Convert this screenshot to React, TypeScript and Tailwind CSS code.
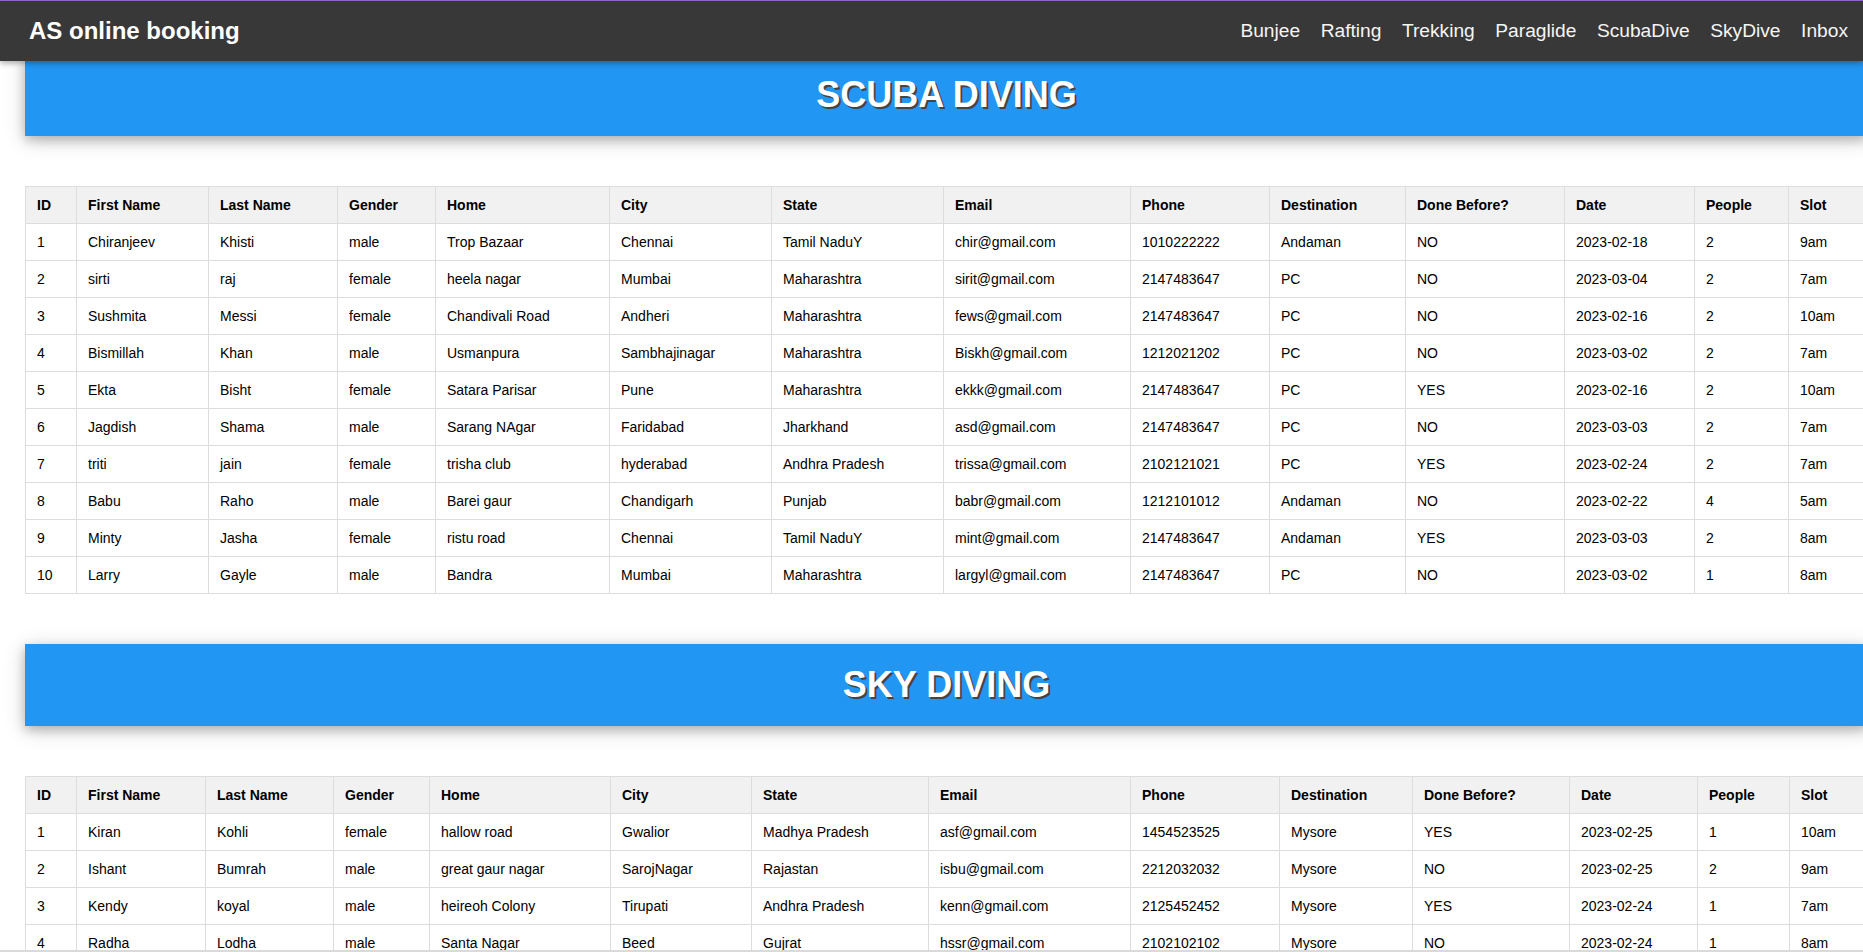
import React from "react";

type Booking = {
	id: number;
	first: string;
	last: string;
	gender: string;
	home: string;
	city: string;
	state: string;
	email: string;
	phone: string;
	destination: string;
	doneBefore: string;
	date: string;
	people: number;
	slot: string;
};

const navLinks = ["Bunjee", "Rafting", "Trekking", "Paraglide", "ScubaDive", "SkyDive", "Inbox"];

const headings = [
	"ID",
	"First Name",
	"Last Name",
	"Gender",
	"Home",
	"City",
	"State",
	"Email",
	"Phone",
	"Destination",
	"Done Before?",
	"Date",
	"People",
	"Slot",
];

const scubaCols = [51, 132, 129, 98, 174, 162, 172, 187, 139, 136, 159, 130, 94, 80];
const skyCols = [51, 129, 128, 96, 181, 141, 177, 202, 149, 133, 157, 128, 92, 79];

const scuba: Booking[] = [
	{ id: 1, first: "Chiranjeev", last: "Khisti", gender: "male", home: "Trop Bazaar", city: "Chennai", state: "Tamil NaduY", email: "chir@gmail.com", phone: "1010222222", destination: "Andaman", doneBefore: "NO", date: "2023-02-18", people: 2, slot: "9am" },
	{ id: 2, first: "sirti", last: "raj", gender: "female", home: "heela nagar", city: "Mumbai", state: "Maharashtra", email: "sirit@gmail.com", phone: "2147483647", destination: "PC", doneBefore: "NO", date: "2023-03-04", people: 2, slot: "7am" },
	{ id: 3, first: "Sushmita", last: "Messi", gender: "female", home: "Chandivali Road", city: "Andheri", state: "Maharashtra", email: "fews@gmail.com", phone: "2147483647", destination: "PC", doneBefore: "NO", date: "2023-02-16", people: 2, slot: "10am" },
	{ id: 4, first: "Bismillah", last: "Khan", gender: "male", home: "Usmanpura", city: "Sambhajinagar", state: "Maharashtra", email: "Biskh@gmail.com", phone: "1212021202", destination: "PC", doneBefore: "NO", date: "2023-03-02", people: 2, slot: "7am" },
	{ id: 5, first: "Ekta", last: "Bisht", gender: "female", home: "Satara Parisar", city: "Pune", state: "Maharashtra", email: "ekkk@gmail.com", phone: "2147483647", destination: "PC", doneBefore: "YES", date: "2023-02-16", people: 2, slot: "10am" },
	{ id: 6, first: "Jagdish", last: "Shama", gender: "male", home: "Sarang NAgar", city: "Faridabad", state: "Jharkhand", email: "asd@gmail.com", phone: "2147483647", destination: "PC", doneBefore: "NO", date: "2023-03-03", people: 2, slot: "7am" },
	{ id: 7, first: "triti", last: "jain", gender: "female", home: "trisha club", city: "hyderabad", state: "Andhra Pradesh", email: "trissa@gmail.com", phone: "2102121021", destination: "PC", doneBefore: "YES", date: "2023-02-24", people: 2, slot: "7am" },
	{ id: 8, first: "Babu", last: "Raho", gender: "male", home: "Barei gaur", city: "Chandigarh", state: "Punjab", email: "babr@gmail.com", phone: "1212101012", destination: "Andaman", doneBefore: "NO", date: "2023-02-22", people: 4, slot: "5am" },
	{ id: 9, first: "Minty", last: "Jasha", gender: "female", home: "ristu road", city: "Chennai", state: "Tamil NaduY", email: "mint@gmail.com", phone: "2147483647", destination: "Andaman", doneBefore: "YES", date: "2023-03-03", people: 2, slot: "8am" },
	{ id: 10, first: "Larry", last: "Gayle", gender: "male", home: "Bandra", city: "Mumbai", state: "Maharashtra", email: "largyl@gmail.com", phone: "2147483647", destination: "PC", doneBefore: "NO", date: "2023-03-02", people: 1, slot: "8am" },
];

const sky: Booking[] = [
	{ id: 1, first: "Kiran", last: "Kohli", gender: "female", home: "hallow road", city: "Gwalior", state: "Madhya Pradesh", email: "asf@gmail.com", phone: "1454523525", destination: "Mysore", doneBefore: "YES", date: "2023-02-25", people: 1, slot: "10am" },
	{ id: 2, first: "Ishant", last: "Bumrah", gender: "male", home: "great gaur nagar", city: "SarojNagar", state: "Rajastan", email: "isbu@gmail.com", phone: "2212032032", destination: "Mysore", doneBefore: "NO", date: "2023-02-25", people: 2, slot: "9am" },
	{ id: 3, first: "Kendy", last: "koyal", gender: "male", home: "heireoh Colony", city: "Tirupati", state: "Andhra Pradesh", email: "kenn@gmail.com", phone: "2125452452", destination: "Mysore", doneBefore: "YES", date: "2023-02-24", people: 1, slot: "7am" },
	{ id: 4, first: "Radha", last: "Lodha", gender: "male", home: "Santa Nagar", city: "Beed", state: "Gujrat", email: "hssr@gmail.com", phone: "2102102102", destination: "Mysore", doneBefore: "NO", date: "2023-02-24", people: 1, slot: "8am" },
];

function Banner({ title }: { title: string }) {
	return (
		<div className="w-[1843px] h-[82px] bg-[#2196F3] flex items-center justify-center shadow-[0_4px_10px_0_rgba(0,0,0,0.2),0_4px_20px_0_rgba(0,0,0,0.19)]">
			<h1 className="text-[36px] font-bold text-white [text-shadow:2px_2px_0_#444]">{title}</h1>
		</div>
	);
}

function BookingTable({ rows, cols }: { rows: Booking[]; cols: number[] }) {
	return (
		<table className="table-fixed border-collapse border border-[#dddddd] w-[1843px] text-[14px] leading-5 text-black">
			<colgroup>
				{cols.map((w, i) => (
					<col key={i} style={{ width: w }} />
				))}
			</colgroup>
			<thead>
				<tr className="bg-[#f1f1f1]">
					{headings.map((h) => (
						<th key={h} className="border border-[#dddddd] text-left font-bold py-2 pl-[11px] pr-2 whitespace-nowrap">
							{h}
						</th>
					))}
				</tr>
			</thead>
			<tbody>
				{rows.map((r) => (
					<tr key={r.id}>
						{[r.id, r.first, r.last, r.gender, r.home, r.city, r.state, r.email, r.phone, r.destination, r.doneBefore, r.date, r.people, r.slot].map((v, i) => (
							<td key={i} className="border border-[#dddddd] py-2 pl-[11px] pr-2 whitespace-nowrap">
								{v}
							</td>
						))}
					</tr>
				))}
			</tbody>
		</table>
	);
}

export default function App() {
	return (
		<div className="relative w-full h-[952px] overflow-hidden bg-white font-['Liberation_Sans',Arial,sans-serif]">
			<nav className="absolute top-0 left-0 right-0 z-10 h-[61px] bg-[#383838] border-t border-[#8f63c9] flex items-center justify-between shadow-[0_2px_6px_rgba(0,0,0,0.35)]">
				<span className="pl-[29px] text-white text-[24px] font-bold">AS online booking</span>
				<div className="flex items-center gap-[20.5px] pr-[15px]">
					{navLinks.map((l) => (
						<a key={l} href="#" className="text-[#f5f5f5] text-[19.2px]">
							{l}
						</a>
					))}
				</div>
			</nav>

			<main className="pt-[54px] pl-[25px] w-[1900px] flex flex-col">
				<Banner title="SCUBA DIVING" />
				<div className="mt-[50px]">
					<BookingTable rows={scuba} cols={scubaCols} />
				</div>
				<div className="mt-[50px]">
					<Banner title="SKY DIVING" />
				</div>
				<div className="mt-[50px]">
					<BookingTable rows={sky} cols={skyCols} />
				</div>
			</main>

			<div className="absolute bottom-0 left-0 right-0 h-[2px] bg-[#dadada]" />
		</div>
	);
}
